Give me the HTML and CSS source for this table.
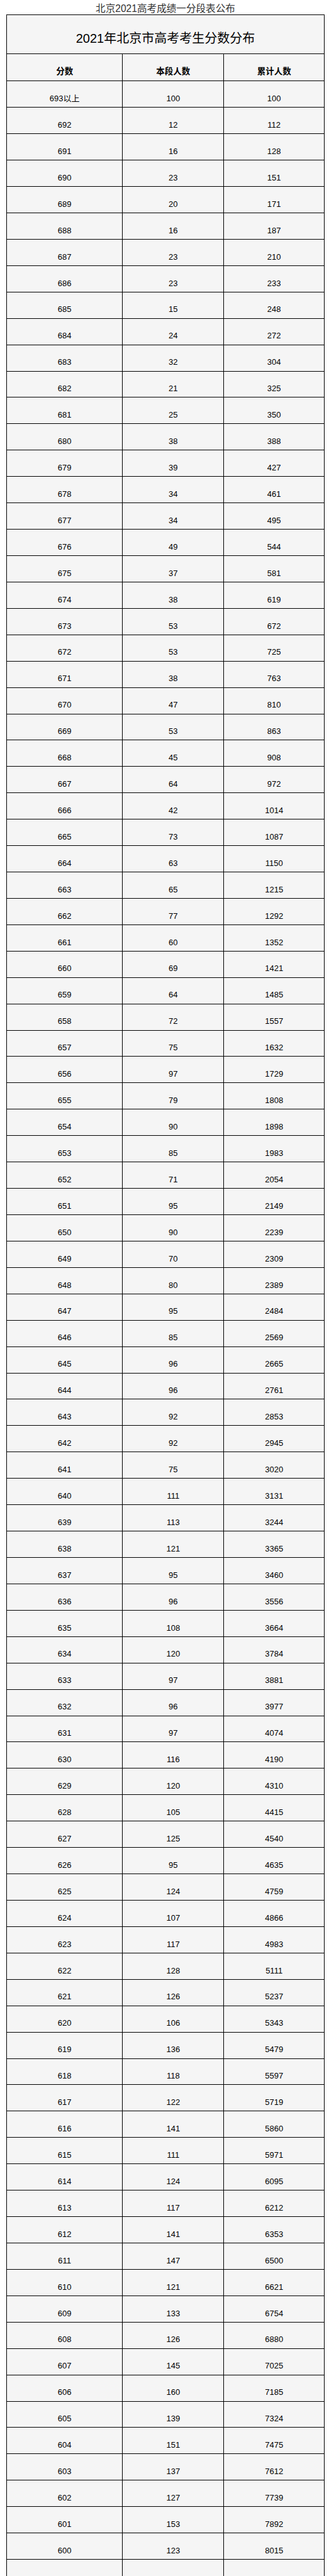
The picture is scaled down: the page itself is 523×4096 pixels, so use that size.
FILE: index.html
```html
<!DOCTYPE html>
<html lang="zh-CN">
<head>
<meta charset="utf-8">
<title>北京2021高考成绩一分段表公布</title>
<link rel="stylesheet" href="styles.css">
</head>
<body>
<div class="page">
  <div class="page-title">北京2021高考成绩一分段表公布</div>
  <div class="table" role="table">
    <div class="caption-row" role="row"><div class="caption" role="columnheader">2021年北京市高考考生分数分布</div></div>
    <div class="row head" role="row"><div class="cell">分数</div><div class="cell">本段人数</div><div class="cell">累计人数</div></div>
    <div class="row"><div class="cell">693以上</div><div class="cell">100</div><div class="cell">100</div></div>
    <div class="row"><div class="cell">692</div><div class="cell">12</div><div class="cell">112</div></div>
    <div class="row"><div class="cell">691</div><div class="cell">16</div><div class="cell">128</div></div>
    <div class="row"><div class="cell">690</div><div class="cell">23</div><div class="cell">151</div></div>
    <div class="row"><div class="cell">689</div><div class="cell">20</div><div class="cell">171</div></div>
    <div class="row"><div class="cell">688</div><div class="cell">16</div><div class="cell">187</div></div>
    <div class="row"><div class="cell">687</div><div class="cell">23</div><div class="cell">210</div></div>
    <div class="row"><div class="cell">686</div><div class="cell">23</div><div class="cell">233</div></div>
    <div class="row"><div class="cell">685</div><div class="cell">15</div><div class="cell">248</div></div>
    <div class="row"><div class="cell">684</div><div class="cell">24</div><div class="cell">272</div></div>
    <div class="row"><div class="cell">683</div><div class="cell">32</div><div class="cell">304</div></div>
    <div class="row"><div class="cell">682</div><div class="cell">21</div><div class="cell">325</div></div>
    <div class="row"><div class="cell">681</div><div class="cell">25</div><div class="cell">350</div></div>
    <div class="row"><div class="cell">680</div><div class="cell">38</div><div class="cell">388</div></div>
    <div class="row"><div class="cell">679</div><div class="cell">39</div><div class="cell">427</div></div>
    <div class="row"><div class="cell">678</div><div class="cell">34</div><div class="cell">461</div></div>
    <div class="row"><div class="cell">677</div><div class="cell">34</div><div class="cell">495</div></div>
    <div class="row"><div class="cell">676</div><div class="cell">49</div><div class="cell">544</div></div>
    <div class="row"><div class="cell">675</div><div class="cell">37</div><div class="cell">581</div></div>
    <div class="row"><div class="cell">674</div><div class="cell">38</div><div class="cell">619</div></div>
    <div class="row"><div class="cell">673</div><div class="cell">53</div><div class="cell">672</div></div>
    <div class="row"><div class="cell">672</div><div class="cell">53</div><div class="cell">725</div></div>
    <div class="row"><div class="cell">671</div><div class="cell">38</div><div class="cell">763</div></div>
    <div class="row"><div class="cell">670</div><div class="cell">47</div><div class="cell">810</div></div>
    <div class="row"><div class="cell">669</div><div class="cell">53</div><div class="cell">863</div></div>
    <div class="row"><div class="cell">668</div><div class="cell">45</div><div class="cell">908</div></div>
    <div class="row"><div class="cell">667</div><div class="cell">64</div><div class="cell">972</div></div>
    <div class="row"><div class="cell">666</div><div class="cell">42</div><div class="cell">1014</div></div>
    <div class="row"><div class="cell">665</div><div class="cell">73</div><div class="cell">1087</div></div>
    <div class="row"><div class="cell">664</div><div class="cell">63</div><div class="cell">1150</div></div>
    <div class="row"><div class="cell">663</div><div class="cell">65</div><div class="cell">1215</div></div>
    <div class="row"><div class="cell">662</div><div class="cell">77</div><div class="cell">1292</div></div>
    <div class="row"><div class="cell">661</div><div class="cell">60</div><div class="cell">1352</div></div>
    <div class="row"><div class="cell">660</div><div class="cell">69</div><div class="cell">1421</div></div>
    <div class="row"><div class="cell">659</div><div class="cell">64</div><div class="cell">1485</div></div>
    <div class="row"><div class="cell">658</div><div class="cell">72</div><div class="cell">1557</div></div>
    <div class="row"><div class="cell">657</div><div class="cell">75</div><div class="cell">1632</div></div>
    <div class="row"><div class="cell">656</div><div class="cell">97</div><div class="cell">1729</div></div>
    <div class="row"><div class="cell">655</div><div class="cell">79</div><div class="cell">1808</div></div>
    <div class="row"><div class="cell">654</div><div class="cell">90</div><div class="cell">1898</div></div>
    <div class="row"><div class="cell">653</div><div class="cell">85</div><div class="cell">1983</div></div>
    <div class="row"><div class="cell">652</div><div class="cell">71</div><div class="cell">2054</div></div>
    <div class="row"><div class="cell">651</div><div class="cell">95</div><div class="cell">2149</div></div>
    <div class="row"><div class="cell">650</div><div class="cell">90</div><div class="cell">2239</div></div>
    <div class="row"><div class="cell">649</div><div class="cell">70</div><div class="cell">2309</div></div>
    <div class="row"><div class="cell">648</div><div class="cell">80</div><div class="cell">2389</div></div>
    <div class="row"><div class="cell">647</div><div class="cell">95</div><div class="cell">2484</div></div>
    <div class="row"><div class="cell">646</div><div class="cell">85</div><div class="cell">2569</div></div>
    <div class="row"><div class="cell">645</div><div class="cell">96</div><div class="cell">2665</div></div>
    <div class="row"><div class="cell">644</div><div class="cell">96</div><div class="cell">2761</div></div>
    <div class="row"><div class="cell">643</div><div class="cell">92</div><div class="cell">2853</div></div>
    <div class="row"><div class="cell">642</div><div class="cell">92</div><div class="cell">2945</div></div>
    <div class="row"><div class="cell">641</div><div class="cell">75</div><div class="cell">3020</div></div>
    <div class="row"><div class="cell">640</div><div class="cell">111</div><div class="cell">3131</div></div>
    <div class="row"><div class="cell">639</div><div class="cell">113</div><div class="cell">3244</div></div>
    <div class="row"><div class="cell">638</div><div class="cell">121</div><div class="cell">3365</div></div>
    <div class="row"><div class="cell">637</div><div class="cell">95</div><div class="cell">3460</div></div>
    <div class="row"><div class="cell">636</div><div class="cell">96</div><div class="cell">3556</div></div>
    <div class="row"><div class="cell">635</div><div class="cell">108</div><div class="cell">3664</div></div>
    <div class="row"><div class="cell">634</div><div class="cell">120</div><div class="cell">3784</div></div>
    <div class="row"><div class="cell">633</div><div class="cell">97</div><div class="cell">3881</div></div>
    <div class="row"><div class="cell">632</div><div class="cell">96</div><div class="cell">3977</div></div>
    <div class="row"><div class="cell">631</div><div class="cell">97</div><div class="cell">4074</div></div>
    <div class="row"><div class="cell">630</div><div class="cell">116</div><div class="cell">4190</div></div>
    <div class="row"><div class="cell">629</div><div class="cell">120</div><div class="cell">4310</div></div>
    <div class="row"><div class="cell">628</div><div class="cell">105</div><div class="cell">4415</div></div>
    <div class="row"><div class="cell">627</div><div class="cell">125</div><div class="cell">4540</div></div>
    <div class="row"><div class="cell">626</div><div class="cell">95</div><div class="cell">4635</div></div>
    <div class="row"><div class="cell">625</div><div class="cell">124</div><div class="cell">4759</div></div>
    <div class="row"><div class="cell">624</div><div class="cell">107</div><div class="cell">4866</div></div>
    <div class="row"><div class="cell">623</div><div class="cell">117</div><div class="cell">4983</div></div>
    <div class="row"><div class="cell">622</div><div class="cell">128</div><div class="cell">5111</div></div>
    <div class="row"><div class="cell">621</div><div class="cell">126</div><div class="cell">5237</div></div>
    <div class="row"><div class="cell">620</div><div class="cell">106</div><div class="cell">5343</div></div>
    <div class="row"><div class="cell">619</div><div class="cell">136</div><div class="cell">5479</div></div>
    <div class="row"><div class="cell">618</div><div class="cell">118</div><div class="cell">5597</div></div>
    <div class="row"><div class="cell">617</div><div class="cell">122</div><div class="cell">5719</div></div>
    <div class="row"><div class="cell">616</div><div class="cell">141</div><div class="cell">5860</div></div>
    <div class="row"><div class="cell">615</div><div class="cell">111</div><div class="cell">5971</div></div>
    <div class="row"><div class="cell">614</div><div class="cell">124</div><div class="cell">6095</div></div>
    <div class="row"><div class="cell">613</div><div class="cell">117</div><div class="cell">6212</div></div>
    <div class="row"><div class="cell">612</div><div class="cell">141</div><div class="cell">6353</div></div>
    <div class="row"><div class="cell">611</div><div class="cell">147</div><div class="cell">6500</div></div>
    <div class="row"><div class="cell">610</div><div class="cell">121</div><div class="cell">6621</div></div>
    <div class="row"><div class="cell">609</div><div class="cell">133</div><div class="cell">6754</div></div>
    <div class="row"><div class="cell">608</div><div class="cell">126</div><div class="cell">6880</div></div>
    <div class="row"><div class="cell">607</div><div class="cell">145</div><div class="cell">7025</div></div>
    <div class="row"><div class="cell">606</div><div class="cell">160</div><div class="cell">7185</div></div>
    <div class="row"><div class="cell">605</div><div class="cell">139</div><div class="cell">7324</div></div>
    <div class="row"><div class="cell">604</div><div class="cell">151</div><div class="cell">7475</div></div>
    <div class="row"><div class="cell">603</div><div class="cell">137</div><div class="cell">7612</div></div>
    <div class="row"><div class="cell">602</div><div class="cell">127</div><div class="cell">7739</div></div>
    <div class="row"><div class="cell">601</div><div class="cell">153</div><div class="cell">7892</div></div>
    <div class="row"><div class="cell">600</div><div class="cell">123</div><div class="cell">8015</div></div>
    <div class="row"><div class="cell"></div><div class="cell"></div><div class="cell"></div></div>
  </div>
</div>
</body>
</html>
```

FILE: styles.css
```css
html, body {
  margin: 0;
  padding: 0;
  background: #ffffff;
}

body {
  font-family: "Liberation Sans", "Noto Sans CJK SC", sans-serif;
  color: #000;
}

.page {
  margin-left: 10px;
  width: 506px;
}

.page-title {
  box-sizing: border-box;
  height: 22.7px;
  padding-top: 3.5px;
  font-size: 15.6px;
  line-height: 20px;
  text-align: center;
  color: #333;
  white-space: nowrap;
}

.table {
  border-left: 1px solid #000;
  border-top: 1px solid #000;
  background: #f5f5f5;
}

.caption-row {
  box-sizing: border-box;
  height: 62.4px;
  border-right: 1px solid #000;
  border-bottom: 1px solid #000;
}

.caption {
  padding-top: 24.9px;
  font-size: 20px;
  line-height: 24px;
  text-align: center;
  white-space: nowrap;
}

.row {
  display: grid;
  grid-template-columns: 184.3px 161px 1fr;
  height: 41.925px;
}

.row.head {
  height: 43.3px;
}

.cell {
  box-sizing: border-box;
  border-right: 1px solid #000;
  border-bottom: 1px solid #000;
  padding-top: 19.7px;
  font-size: 13px;
  line-height: 15px;
  text-align: center;
  white-space: nowrap;
}

.head .cell {
  padding-top: 20px;
  font-size: 13.5px;
  line-height: 16px;
  font-weight: bold;
}
```
